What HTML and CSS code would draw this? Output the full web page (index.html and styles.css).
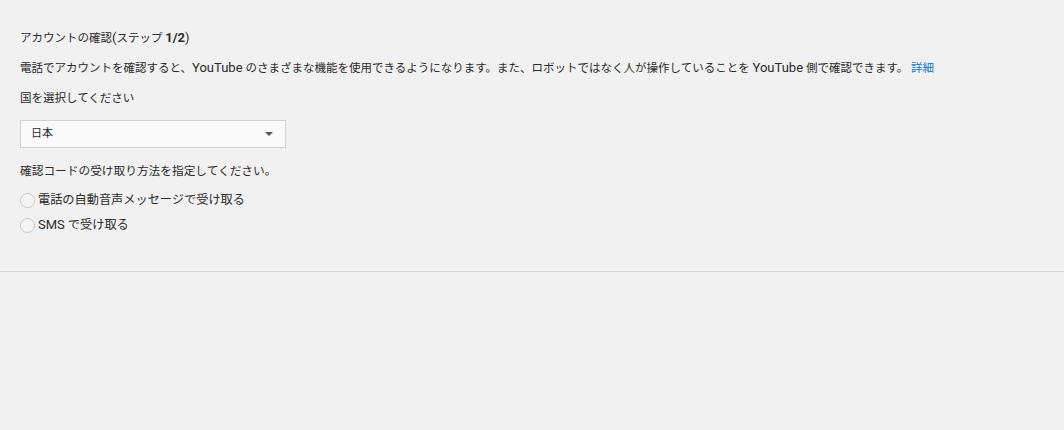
FILE: index.html
```html
<!DOCTYPE html>
<html lang="ja">
<head>
<meta charset="utf-8">
<link rel="stylesheet" href="styles.css">
</head>
<body>
<div class="content">
  <h1 class="title">アカウントの確認<span class="lat">(</span>ステップ <b class="lat">1/2</b><span class="lat">)</span></h1>
  <p class="line">電話でアカウントを確認すると、<span class="lat">YouTube</span> のさまざまな機能を使用できるようになります。また、ロボットではなく人が操作していることを <span class="lat">YouTube</span> 側で確認できます。 <a class="link" href="#">詳細</a></p>
  <p class="line">国を選択してください</p>
  <div class="select">
    <span class="select-value">日本</span>
    <span class="arrow"></span>
  </div>
  <p class="line line-method">確認コードの受け取り方法を指定してください。</p>
  <label class="radio"><span class="circle"></span><span>電話の自動音声メッセージで受け取る</span></label>
  <label class="radio"><span class="circle"></span><span><span class="lat">SMS</span> で受け取る</span></label>
</div>
<hr class="divider">
</body>
</html>
```
FILE: styles.css
```css
html, body {
  margin: 0;
  padding: 0;
  background: #f1f1f1;
}
body {
  font-family: Roboto, "Noto Sans CJK JP", sans-serif;
  font-size: 11.5px;
  color: #2b2b2b;
  line-height: 16px;
}
.lat {
  font-size: 13px;
}
.content {
  box-sizing: border-box;
  height: 271px;
  padding: 30px 20px 0 20px;
}
.title {
  font-size: 11.5px;
  font-weight: normal;
  margin: 0;
  line-height: 16px;
}
.title b { font-weight: bold; }
.line {
  margin: 14px 0 0 0;
}
.link {
  color: #167ac6;
  text-decoration: none;
}
.select {
  margin-top: 14px;
  width: 264px;
  height: 26px;
  border: 1px solid #d3d3d3;
  background: #fafafa;
  display: flex;
  align-items: center;
  justify-content: space-between;
}
.select-value {
  font-size: 11px;
  padding-left: 10px;
}
.arrow {
  width: 0;
  height: 0;
  border-left: 4px solid transparent;
  border-right: 4px solid transparent;
  border-top: 4px solid #555;
  margin-right: 12px;
}
.line-method {
  margin-top: 15px;
  font-size: 11.7px;
}
.radio {
  display: flex;
  align-items: center;
  gap: 3px;
  height: 16px;
  margin-top: 13px;
  font-size: 12.2px;
}
.radio + .radio { margin-top: 9px; }
.circle {
  width: 13px;
  height: 13px;
  border: 1px solid #c8c8c8;
  border-radius: 50%;
  background: #f4f4f4;
}
.divider {
  border: 0;
  border-top: 1px solid #d6d6d6;
  margin: 0;
}
```
